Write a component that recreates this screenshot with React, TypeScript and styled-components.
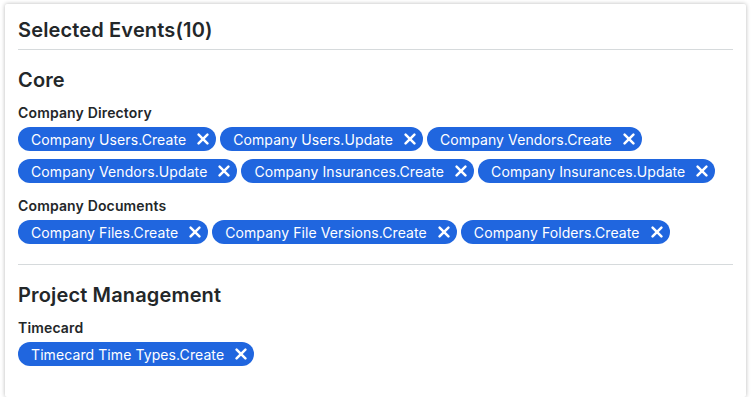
import React from "react";
import styled, { createGlobalStyle } from "styled-components";

const GlobalStyle = createGlobalStyle`
  body {
    margin: 0;
    background: #ffffff;
    font-family: Inter, "Noto Sans", sans-serif;
    color: #232729;
  }
`;

interface EventGroup {
  label: string;
  events: string[];
}

interface EventSection {
  title: string;
  groups: EventGroup[];
}

const sections: EventSection[] = [
  {
    title: "Core",
    groups: [
      {
        label: "Company Directory",
        events: [
          "Company Users.Create",
          "Company Users.Update",
          "Company Vendors.Create",
          "Company Vendors.Update",
          "Company Insurances.Create",
          "Company Insurances.Update",
        ],
      },
      {
        label: "Company Documents",
        events: [
          "Company Files.Create",
          "Company File Versions.Create",
          "Company Folders.Create",
        ],
      },
    ],
  },
  {
    title: "Project Management",
    groups: [
      {
        label: "Timecard",
        events: ["Timecard Time Types.Create"],
      },
    ],
  },
];

const Card = styled.div`
  margin: 4px 0 0 5px;
  width: 741px;
  height: 393px;
  box-sizing: border-box;
  padding: 12px 13px 12px 13px;
  background: #ffffff;
  border-radius: 2px;
  box-shadow: 0 0 4px rgba(0, 0, 0, 0.28);
`;

const Title = styled.h2`
  margin: 0;
  padding-bottom: 5px;
  border-bottom: 1px solid #d6dadc;
  font-size: 20px;
  line-height: 28px;
  font-weight: 600;
  letter-spacing: 0.15px;
`;

const Section = styled.section`
  padding-top: 16px;

  & + & {
    margin-top: 20px;
    border-top: 1px solid #d6dadc;
  }
`;

const SectionTitle = styled.h3`
  margin: 0 0 9px;
  font-size: 20px;
  line-height: 28px;
  font-weight: 600;
  letter-spacing: 0.15px;
`;

const Group = styled.div`
  & + & {
    margin-top: 13px;
  }
`;

const GroupLabel = styled.div`
  font-size: 14px;
  line-height: 20px;
  font-weight: 600;
  letter-spacing: 0.15px;
  margin-bottom: 4px;
`;

const ChipList = styled.div`
  display: flex;
  flex-wrap: wrap;
  gap: 8px 4px;
`;

const Chip = styled.span`
  display: inline-flex;
  align-items: center;
  height: 24px;
  padding: 0 7px 0 13px;
  border-radius: 12px;
  background: #2066df;
  color: #ffffff;
  font-size: 14px;
  font-weight: 400;
  letter-spacing: 0.09px;
  white-space: nowrap;
`;

const RemoveButton = styled.button`
  display: inline-flex;
  align-items: center;
  justify-content: center;
  margin-left: 11px;
  padding: 0;
  width: 12px;
  height: 12px;
  border: none;
  background: transparent;
  color: #ffffff;
  cursor: pointer;
`;

const CloseIcon = () => (
  <svg width="12" height="12" viewBox="0 0 12 12" fill="none">
    <path
      d="M1.6 1.6 L10.4 10.4 M10.4 1.6 L1.6 10.4"
      stroke="currentColor"
      strokeWidth="2.5"
      strokeLinecap="round"
    />
  </svg>
);

export default function App() {
  const total = sections.reduce(
    (sum, s) => sum + s.groups.reduce((n, g) => n + g.events.length, 0),
    0
  );

  return (
    <>
      <GlobalStyle />
      <Card>
        <Title>Selected Events({total})</Title>
        {sections.map((section) => (
          <Section key={section.title}>
            <SectionTitle>{section.title}</SectionTitle>
            {section.groups.map((group) => (
              <Group key={group.label}>
                <GroupLabel>{group.label}</GroupLabel>
                <ChipList>
                  {group.events.map((event) => (
                    <Chip key={event}>
                      {event}
                      <RemoveButton aria-label={`Remove ${event}`}>
                        <CloseIcon />
                      </RemoveButton>
                    </Chip>
                  ))}
                </ChipList>
              </Group>
            ))}
          </Section>
        ))}
      </Card>
    </>
  );
}
